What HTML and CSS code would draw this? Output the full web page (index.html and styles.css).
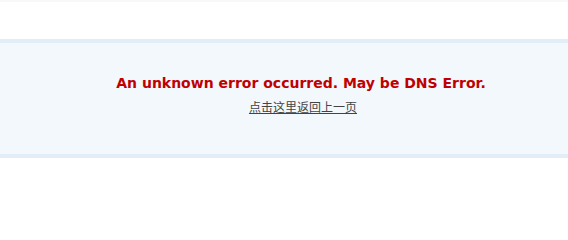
FILE: index.html
```html
<!DOCTYPE html>
<html>
<head>
<meta charset="utf-8">
<link rel="stylesheet" href="styles.css">
</head>
<body>
<div class="topline"></div>
<div class="errbox">
  <div class="inner">
    <h1 class="msg">An unknown error occurred. May be DNS Error.</h1>
    <a class="back" href="#">点击这里返回上一页</a>
  </div>
</div>
</body>
</html>
```
FILE: styles.css
```css
html, body {
  margin: 0;
  padding: 0;
  background: #ffffff;
}
body {
  font-family: "DejaVu Sans", Verdana, sans-serif;
}
.topline {
  height: 2px;
  background: #f8f8f8;
}
.errbox {
  margin-top: 37px;
  border-top: 4px solid #e1edf7;
  border-bottom: 4px solid #e1edf7;
  background: #f2f8fc;
  height: 111px;
  box-sizing: content-box;
}
.inner {
  padding-top: 29px;
  padding-left: 34px;
  text-align: center;
}
.msg {
  margin: 0;
  font-size: 14px;
  line-height: 22px;
  font-weight: bold;
  color: #c00000;
}
.back {
  display: inline-block;
  margin-top: 6px;
  margin-left: 4px;
  font-family: "Noto Sans CJK SC", sans-serif;
  font-size: 12px;
  line-height: 14px;
  color: #444444;
  text-decoration: underline;
}
```
